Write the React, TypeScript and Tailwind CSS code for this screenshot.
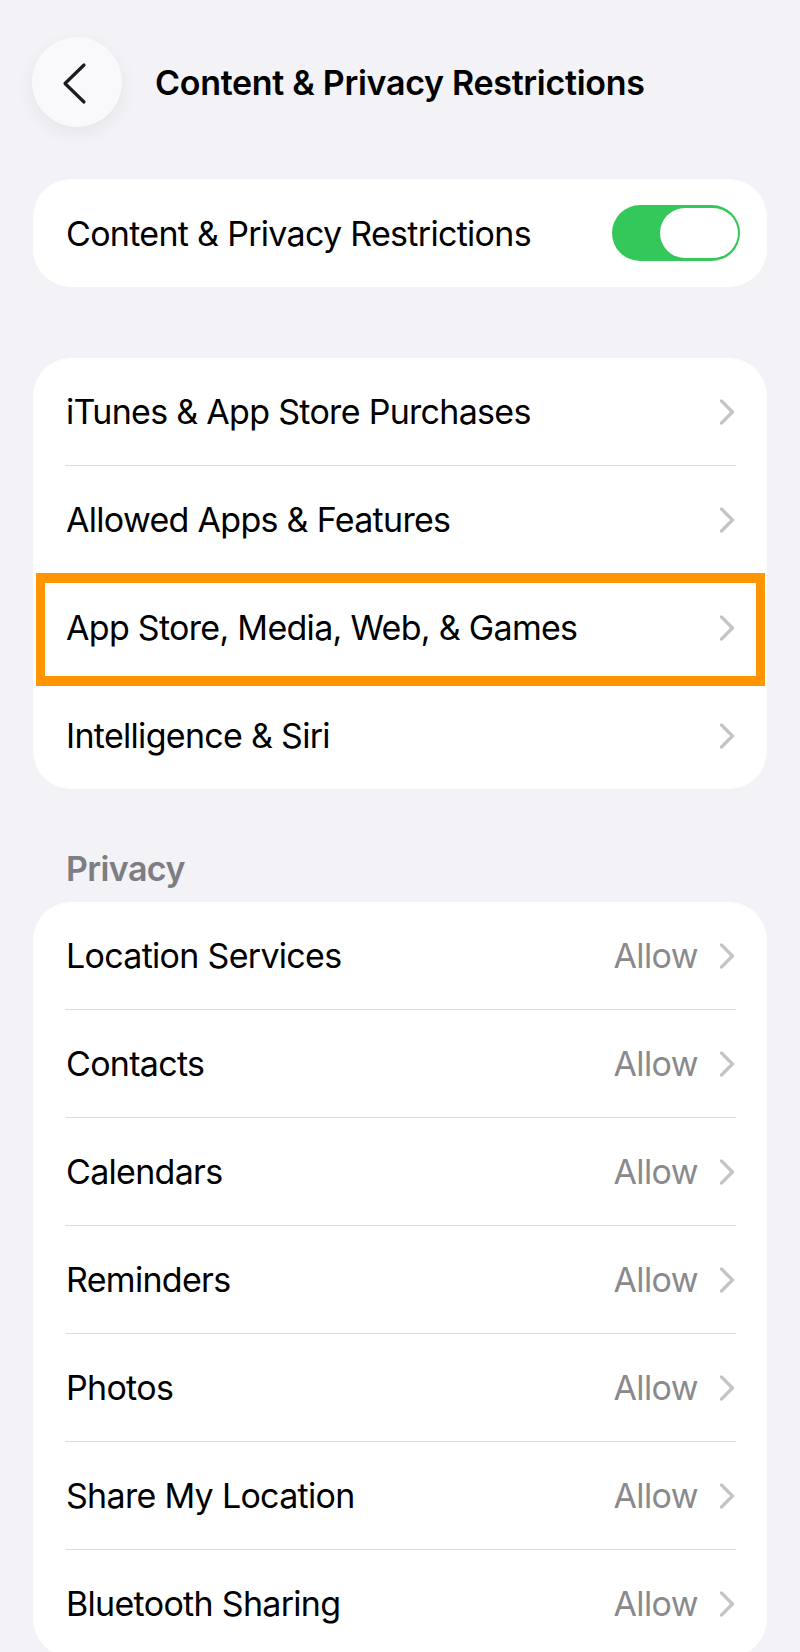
import React from "react";

const font = { fontFamily: "Inter, 'Noto Sans', sans-serif" };

function Chevron() {
  return (
    <svg width="16" height="26" viewBox="0 0 16 26" className="shrink-0">
      <path d="M2.5 2 L13.5 13 L2.5 24" fill="none" stroke="#c4c4c7" strokeWidth="3.2" strokeLinecap="round" strokeLinejoin="round" />
    </svg>
  );
}

function Row({ label, value, last, highlight }: { label: string; value?: string; last?: boolean; highlight?: boolean }) {
  return (
    <div className="relative">
      <div className="flex h-[107px] items-center pl-[33px] pr-[32px]">
        <span className="flex-1 text-[34px] tracking-[-0.7px] text-black">{label}</span>
        {value && <span className="mr-[21px] text-[34px] tracking-[-0.6px] text-[#8a8a8e]">{value}</span>}
        <Chevron />
      </div>
      {!last && <div className="ml-[32px] mr-[31px] h-px bg-[#dcdcdf]" />}
      {highlight && (
        <div className="pointer-events-none absolute left-[3px] right-[2px] top-[-1px] bottom-[-4px] border-x-[9px] border-y-[10px] border-[#ff9500]" />
      )}
    </div>
  );
}

export default function App() {
  const privacy = [
    "Location Services",
    "Contacts",
    "Calendars",
    "Reminders",
    "Photos",
    "Share My Location",
    "Bluetooth Sharing",
  ];
  return (
    <div className="h-[1652px] w-[800px] overflow-hidden bg-[#f2f2f7]" style={font}>
      <div className="flex items-center pl-[32px] pt-[37px]">
        <div className="flex h-[90px] w-[90px] items-center justify-center rounded-full bg-[#f9f9fb] shadow-[0_6px_20px_rgba(0,0,0,0.06)]">
          <svg width="90" height="90" viewBox="0 0 90 90">
            <path d="M52 28 L33 46.5 L52 65" fill="none" stroke="#1c1c1e" strokeWidth="3.2" strokeLinecap="round" strokeLinejoin="round" />
          </svg>
        </div>
        <div className="ml-[33px] text-[34px] font-semibold tracking-[-0.3px] text-black">Content &amp; Privacy Restrictions</div>
      </div>

      <div className="mx-[33px] mt-[52px] flex h-[108px] items-center rounded-[38px] bg-white pl-[33px] pr-[27px]">
        <span className="flex-1 text-[34px] tracking-[-0.7px] text-black">Content &amp; Privacy Restrictions</span>
        <div className="flex h-[56px] w-[128px] items-center justify-end rounded-full bg-[#34c759] pr-[2px]">
          <div className="h-[50px] w-[78px] rounded-full bg-white" />
        </div>
      </div>

      <div className="mx-[33px] mt-[71px] overflow-visible rounded-[38px] bg-white">
        <Row label="iTunes & App Store Purchases" />
        <Row label="Allowed Apps & Features" />
        <Row label="App Store, Media, Web, & Games" highlight />
        <Row label="Intelligence & Siri" last />
      </div>

      <div className="ml-[66px] mt-[60px] text-[34px] font-semibold leading-[40px] tracking-[-0.6px] text-[#7d7d82]">Privacy</div>

      <div className="mx-[33px] mt-[13px] rounded-[38px] bg-white">
        {privacy.map((p, i) => (
          <Row key={p} label={p} value="Allow" last={i === privacy.length - 1} />
        ))}
      </div>
    </div>
  );
}
